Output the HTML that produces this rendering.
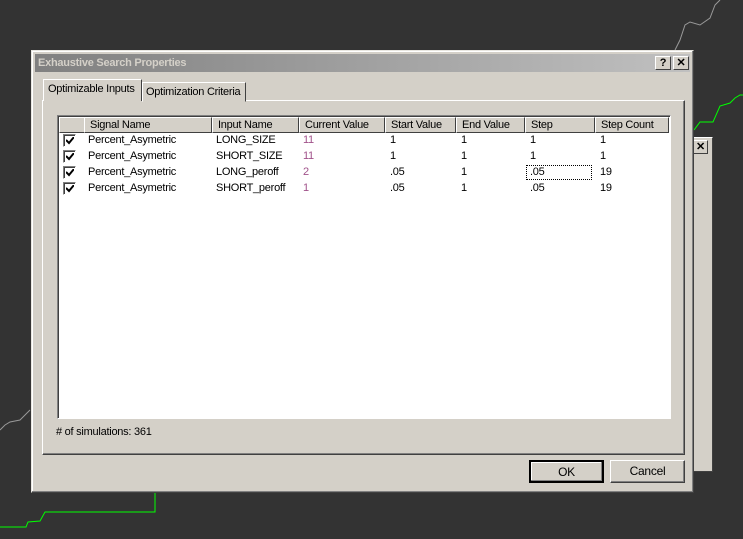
<!DOCTYPE html>
<html><head><style>
*{box-sizing:border-box;margin:0;padding:0}
body{width:743px;height:539px;background:#333;position:relative;overflow:hidden;font-family:"Liberation Sans",sans-serif;font-size:11px;color:#000;letter-spacing:-0.25px;white-space:nowrap}
.abs{position:absolute}
.dlg{left:31px;top:50px;width:663px;height:443px;background:#d4d0c8;border:1px solid;border-color:#e8e6e0 #404040 #404040 #e8e6e0;box-shadow:inset -1px -1px #808080,inset 1px 1px #fff}
.title{left:3px;top:3px;width:655px;height:18px;background:linear-gradient(90deg,#808080,#c0c0c0);color:#d4d0c8;font-weight:bold;font-size:11px;line-height:18px;padding-left:3px}
.tb{width:16px;height:14px;background:#d4d0c8;border:1px solid;border-color:#fff #404040 #404040 #fff;top:2px;font-size:11px;font-weight:bold;text-align:center;line-height:12px}
.panel{left:10px;top:49px;width:643px;height:355px;border:1px solid;border-color:#fff #404040 #404040 #fff;box-shadow:inset -1px -1px #808080}
.tab{height:20px;border:1px solid;border-color:#fff #404040 transparent #fff;background:#d4d0c8;padding:0 4px;line-height:18px}
.list{left:25px;top:64px;width:614px;height:304px;background:#fff;border:1px solid;border-color:#808080 #fff #fff #808080;box-shadow:inset 1px 1px #404040}
.hd{top:1px;height:16px;background:#d4d0c8;border:1px solid;border-color:#fff #404040 #404040 #fff;padding-left:5px;line-height:14px}
.c{line-height:16px}
.cb{width:13px;height:13px;border:1px solid;border-color:#808080 #fff #fff #808080;box-shadow:inset 1px 1px #404040;background:#fff}
.cb svg{position:absolute;left:2px;top:2px}
.btn{width:75px;height:23px;background:#d4d0c8;text-align:center;line-height:21px;font-size:12px;border:1px solid;border-color:#fff #404040 #404040 #fff}
.p{color:#a0528a}
</style></head><body>
<svg class="abs" style="left:0;top:0" width="743" height="539">
<polyline fill="none" stroke="#0f0" points="0,527 26,527 28,522 40,521 45,512 155,512 155,492"/>
<polyline fill="none" stroke="#0f0" points="694,130 700,122 713,122 720,106 730,103 735,98 740,95 743,95"/>
<polyline fill="none" stroke="#999" points="675,50 680,40 685,25 690,22 700,25 710,18 715,5 720,0"/>
<polyline fill="none" stroke="#999" points="0,430 5,425 10,422 20,420 28,412 30,410"/>
</svg>
<div class="abs" style="left:690px;top:137px;width:23px;height:335px;background:#d4d0c8;border:1px solid;border-color:#fff #404040 #404040 #fff"></div>
<div class="abs tb" style="left:693px;top:140px;width:15px">✕</div>
<div class="abs dlg">
<div class="abs title">Exhaustive Search Properties</div>
<div class="abs tb" style="left:623px;top:5px">?</div>
<div class="abs tb" style="left:641px;top:5px">✕</div>
<div class="abs panel"></div>
<div class="abs tab" style="left:11px;top:28px;height:22px;width:99px;background:#d4d0c8;border-bottom:none">Optimizable Inputs</div>
<div class="abs tab" style="left:110px;top:31px;width:104px;padding:0 3px">Optimization Criteria</div>
<div class="abs list">
<div class="abs hd" style="left:1px;width:26px"></div>
<div class="abs hd" style="left:26px;width:128px">Signal Name</div>
<div class="abs hd" style="left:154px;width:87px">Input Name</div>
<div class="abs hd" style="left:241px;width:86px">Current Value</div>
<div class="abs hd" style="left:327px;width:71px">Start Value</div>
<div class="abs hd" style="left:398px;width:69px">End Value</div>
<div class="abs hd" style="left:467px;width:70px">Step</div>
<div class="abs hd" style="left:537px;width:74px">Step Count</div>
<div class="abs cb" style="left:5px;top:18px"><svg width="8" height="8"><path d="M0 3L3 6L8 0" stroke="#000" stroke-width="2" fill="none"/></svg></div>
<div class="abs cb" style="left:5px;top:34px"><svg width="8" height="8"><path d="M0 3L3 6L8 0" stroke="#000" stroke-width="2" fill="none"/></svg></div>
<div class="abs cb" style="left:5px;top:50px"><svg width="8" height="8"><path d="M0 3L3 6L8 0" stroke="#000" stroke-width="2" fill="none"/></svg></div>
<div class="abs cb" style="left:5px;top:66px"><svg width="8" height="8"><path d="M0 3L3 6L8 0" stroke="#000" stroke-width="2" fill="none"/></svg></div>
<div class="abs c" style="left:30px;top:16px">Percent_Asymetric<br>Percent_Asymetric<br>Percent_Asymetric<br>Percent_Asymetric</div>
<div class="abs c" style="left:158px;top:16px">LONG_SIZE<br>SHORT_SIZE<br>LONG_peroff<br>SHORT_peroff</div>
<div class="abs c p" style="left:245px;top:16px">11<br>11<br>2<br>1</div>
<div class="abs c" style="left:332px;top:16px">1<br>1<br>.05<br>.05</div>
<div class="abs c" style="left:403px;top:16px">1<br>1<br>1<br>1</div>
<div class="abs c" style="left:472px;top:16px">1<br>1<br>.05<br>.05</div>
<div class="abs" style="left:468px;top:49px;width:66px;height:15px;border:1px dotted #000"></div>
<div class="abs c" style="left:542px;top:16px">1<br>1<br>19<br>19</div>
</div>
<div class="abs" style="left:24px;top:375px">#  of simulations: 361</div>
<div class="abs btn" style="left:497px;top:409px;border:2px solid;border-color:#000;box-shadow:inset -1px -1px #808080,inset 1px 1px #fff">OK</div>
<div class="abs btn" style="left:578px;top:409px;box-shadow:inset -1px -1px #808080">Cancel</div>
</div>
</body></html>
